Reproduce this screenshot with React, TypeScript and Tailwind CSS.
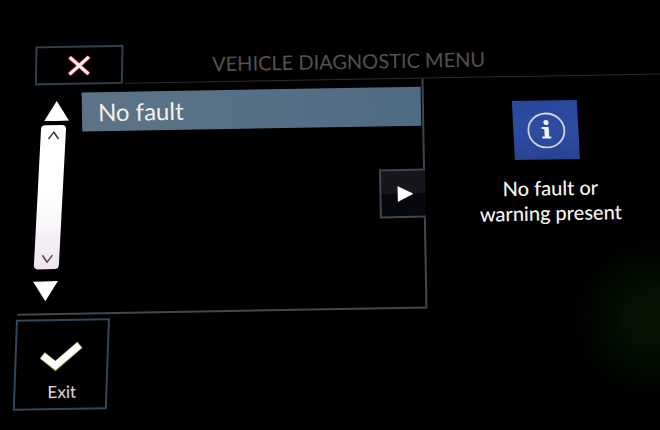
import type { ReactNode } from "react";

const faults = [{ id: 1, title: "No fault" }];

const CrossIcon = () => (
  <svg width="24" height="20" viewBox="0 0 24 20" aria-hidden="true">
    <path
      d="M2 1 22 19M22 1 2 19"
      fill="none"
      stroke="#b81f35"
      strokeWidth="4.6"
    />
    <path
      d="M2.5 1.5 21.5 18.5M21.5 1.5 2.5 18.5"
      fill="none"
      stroke="#fff1f1"
      strokeWidth="3"
    />
  </svg>
);

const CheckIcon = () => (
  <svg width="44" height="30" viewBox="0 0 44 30" aria-hidden="true">
    <path
      d="M3 13 16 24 41 3"
      fill="none"
      stroke="#6f8f35"
      strokeWidth="8.4"
    />
    <path
      d="M3.5 13.5 16 23.5 40.5 3.5"
      fill="none"
      stroke="#ffffff"
      strokeWidth="7"
    />
  </svg>
);

const InfoIcon = () => (
  <svg width="40" height="38" viewBox="0 0 40 38" aria-hidden="true">
    <ellipse
      cx="20"
      cy="19"
      rx="18"
      ry="17"
      fill="none"
      stroke="#cfd0e0"
      strokeWidth="1.8"
    />
    <circle cx="20" cy="11" r="2.6" fill="#f3f1ee" />
    <path d="M15.5 15.5h7v9.5h2v2h-9v-2h2.5v-7.5h-2.5z" fill="#f3f1ee" />
  </svg>
);

const ScrollButton = ({
  label,
  children,
}: {
  label: string;
  children: ReactNode;
}) => (
  <button type="button" aria-label={label} className="block cursor-pointer">
    <svg width="25" height="20" viewBox="0 0 25 20" aria-hidden="true">
      {children}
    </svg>
  </button>
);

const Scrollbar = () => (
  <div className="flex w-[68px] flex-col items-center justify-between pt-4 pb-3">
    <div className="pl-4">
      <ScrollButton label="Scroll up">
        <path d="M13 0 25 20H0z" fill="#ffffff" />
      </ScrollButton>
    </div>
    <div className="mt-1 mb-3 flex w-[25px] flex-1 -skew-x-[4deg] flex-col items-center justify-between rounded-sm bg-gradient-to-b from-white via-white to-[#eee4ee] py-[6px]">
      <svg width="12" height="9" viewBox="0 0 12 9" aria-hidden="true">
        <path d="M1 8 6 1l5 7" fill="none" stroke="#3b3440" strokeWidth="1.5" />
      </svg>
      <svg width="12" height="9" viewBox="0 0 12 9" aria-hidden="true">
        <path d="M1 1l5 7 5-7" fill="none" stroke="#5c4458" strokeWidth="1.5" />
      </svg>
    </div>
    <div className="pr-3">
      <ScrollButton label="Scroll down">
        <path d="M0 0H25L12 20z" fill="#ffffff" />
      </ScrollButton>
    </div>
  </div>
);

const FrameEdge = () => (
  <div className="z-10 -ml-[43px] flex w-[46px] flex-col">
    <div className="h-[90px] border-r-2 border-[#3f474d]" />
    <button
      type="button"
      aria-label="Show details"
      className="flex h-[49px] cursor-pointer items-center justify-center border-2 border-r-0 border-[#3f484e] bg-gradient-to-b from-[#15171c] from-50% to-[#06080e] to-50% pl-1"
    >
      <svg width="16" height="16" viewBox="0 0 16 16" aria-hidden="true">
        <path d="M0 0 16 8 0 16z" fill="#ffffff" />
      </svg>
    </button>
    <div className="flex-1 border-r-2 border-[#3f484e]" />
  </div>
);

const FaultList = () => (
  <section className="ml-3 flex h-[230px] border-b-2 border-[#3f484e]">
    <Scrollbar />
    <ul className="flex-1 pt-2">
      {faults.map((fault) => (
        <li
          key={fault.id}
          className="flex h-[39px] items-center bg-gradient-to-r from-[#5d7487] to-[#4f6b84] pl-4 text-[24px] text-[#f4f1ea]"
        >
          {fault.title}
        </li>
      ))}
    </ul>
    <FrameEdge />
  </section>
);

const FaultDetail = () => (
  <section className="flex flex-col items-center pt-6 pl-1">
    <div className="flex h-[59px] w-[65px] skew-x-[2deg] items-center justify-center bg-gradient-to-b from-[#29479b] via-[#2d4da3] to-[#284391]">
      <InfoIcon />
    </div>
    <p className="mt-4 pl-2 text-center text-[20px] leading-[25px] font-medium text-[#f6f3ee]">
      No fault or
      <br />
      warning present
    </p>
  </section>
);

export default function App() {
  return (
    <div className="min-h-screen overflow-hidden bg-black bg-[radial-gradient(circle_at_99%_74%,#081203_0,#031002_30px,#000000_80px)] font-[Lato,'Open_Sans',sans-serif]">
      <div className="origin-top-left -rotate-1">
        <header className="flex pt-[47px] pl-[34px]">
          <button
            type="button"
            aria-label="Close"
            className="flex h-[39px] w-[88px] -skew-x-[2deg] cursor-pointer items-center justify-center border-2 border-[#2f404d]"
          >
            <CrossIcon />
          </button>
          <div className="ml-[2px] flex-1 border-b border-[#2b2b2b] pt-[6px] pl-[87px]">
            <h1 className="text-[20px] leading-7 text-[#55514d]">
              VEHICLE DIAGNOSTIC MENU
            </h1>
          </div>
        </header>

        <main className="grid grid-cols-[422fr_238fr]">
          <FaultList />
          <FaultDetail />
        </main>

        <footer className="pt-1 pl-2">
          <button
            type="button"
            className="h-[91px] w-[94px] -skew-x-[3deg] cursor-pointer border-2 border-[#30475a]"
          >
            <span className="flex skew-x-[3deg] flex-col items-center gap-2 pt-4 text-[17px] leading-6 font-medium text-[#d6d0d0]">
              <CheckIcon />
              <span>Exit</span>
            </span>
          </button>
        </footer>
      </div>
    </div>
  );
}
